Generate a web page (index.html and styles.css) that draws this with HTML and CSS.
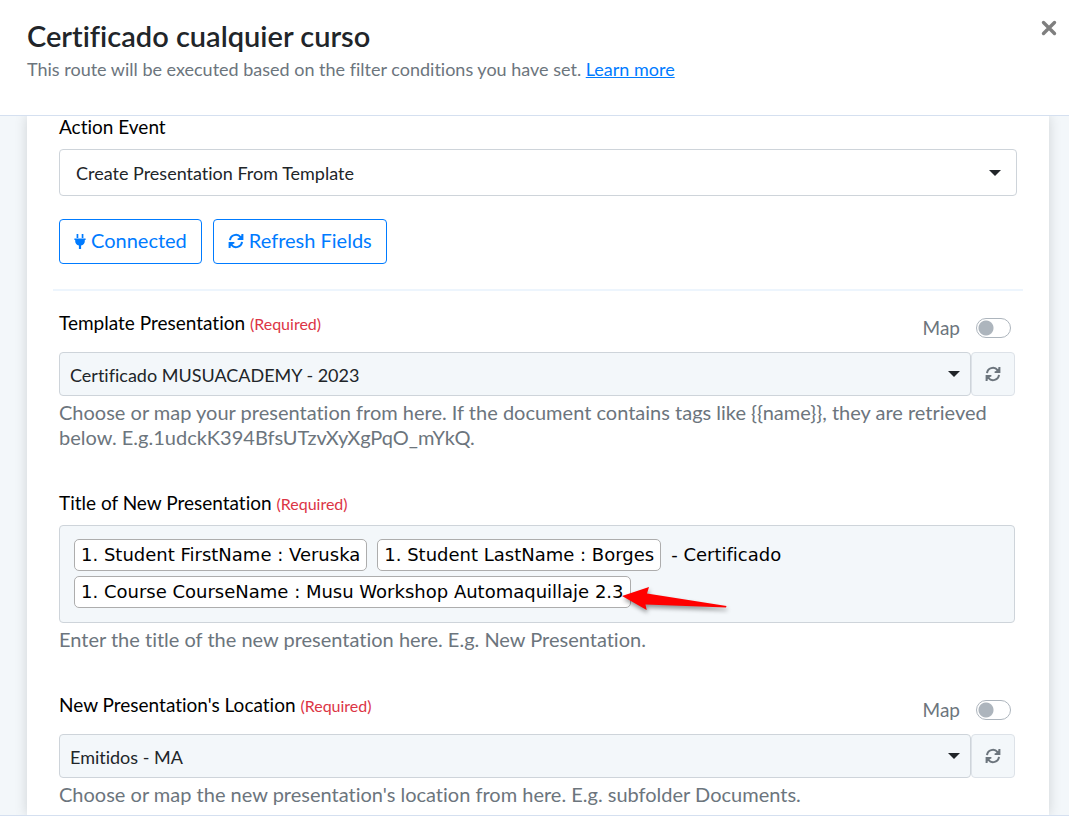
FILE: index.html
```html
<!DOCTYPE html>
<html lang="en">
    <head>
        <meta charset="utf-8" />
        <title>Certificado cualquier curso</title>
        <meta name="viewport" content="width=device-width" />
        <link rel="stylesheet" href="styles.css">
    </head>
    <body>
        <svg width="0" height="0" class="sprite" aria-hidden="true">
            <symbol id="icon-sync" viewBox="0 0 16 16">
                <path d="M2 7.2A6 6 0 0 1 12.6 4.1M14 8.8A6 6 0 0 1 3.4 11.9" fill="none" stroke="currentColor" stroke-width="2" />
                <path d="M15.4 1v6H9.6V5.4l1.4-.3 2.4-2.6V1zM.6 15V9h5.8v1.6l-1.4.3-2.4 2.6V15z" fill="currentColor" />
            </symbol>
            <symbol id="icon-plug" viewBox="0 0 12 16">
                <path d="M2.6 1h1.7v4H2.6zM7.7 1h1.7v4H7.7zM.4 5.5h11.2v1.6h-.8v1.2c0 2.1-1.5 3.9-3.7 4.3V16H4.9v-3.4C2.7 12.2 1.2 10.4 1.2 8.3V7.1H.4z" fill="currentColor" />
            </symbol>
        </svg>

        <div class="modal">
            <header class="modal-header">
                <div>
                    <h1>Certificado cualquier curso</h1>
                    <p>This route will be executed based on the filter conditions you have set. <a href="#">Learn more</a></p>
                </div>
                <button type="button" class="close" aria-label="Close">
                    <svg width="16" height="16" viewBox="0 0 16 16"><path d="M2.5 2.5l11 11M13.5 2.5l-11 11" stroke="currentColor" stroke-width="3.4" stroke-linecap="round" /></svg>
                </button>
            </header>

            <main class="modal-body">
                <form class="card">
                    <label class="event-label" for="action-event">Action Event</label>
                    <div class="select event-select">
                        <select id="action-event">
                            <option>Create Presentation From Template</option>
                        </select>
                    </div>

                    <div class="actions">
                        <button type="button" class="btn"><svg width="12" height="16"><use href="#icon-plug" /></svg>Connected</button>
                        <button type="button" class="btn"><svg width="16" height="16"><use href="#icon-sync" /></svg>Refresh Fields</button>
                    </div>

                    <hr />

                    <div class="field">
                        <div class="field-head">
                            <label for="template">Template Presentation <span class="required">(Required)</span></label>
                            <label class="map">Map <input type="checkbox" class="switch" /></label>
                        </div>
                        <div class="input-group">
                            <div class="select">
                                <select id="template">
                                    <option>Certificado MUSUACADEMY - 2023</option>
                                </select>
                            </div>
                            <button type="button" class="reload" aria-label="Refresh templates"><svg width="16" height="16"><use href="#icon-sync" /></svg></button>
                        </div>
                        <p class="help">Choose or map your presentation from here. If the document contains tags like {{name}}, they are retrieved below. E.g.1udckK394BfsUTzvXyXgPqO_mYkQ.</p>
                    </div>

                    <div class="field">
                        <div class="field-head compact">
                            <label id="title-label">Title of New Presentation <span class="required">(Required)</span></label>
                        </div>
                        <div class="tag-input" role="textbox" contenteditable="true" spellcheck="false" aria-labelledby="title-label">
                            <span class="tag">1. Student FirstName : Veruska</span>
                            <span class="tag">1. Student LastName : Borges</span>
                            <span>- Certificado</span>
                            <span class="tag">1. Course CourseName : Musu Workshop Automaquillaje 2.3<svg class="arrow" width="116" height="36" viewBox="0 0 116 36" aria-hidden="true"><path d="M4 14L31 5l-2 6.5L108.5 24l-.5 1.5L27.5 22.5l1.2 5.5z" fill="#f00" /></svg></span>
                        </div>
                        <p class="help">Enter the title of the new presentation here. E.g. New Presentation.</p>
                    </div>

                    <div class="field">
                        <div class="field-head">
                            <label for="location">New Presentation's Location <span class="required">(Required)</span></label>
                            <label class="map">Map <input type="checkbox" class="switch" /></label>
                        </div>
                        <div class="input-group">
                            <div class="select">
                                <select id="location">
                                    <option>Emitidos - MA</option>
                                </select>
                            </div>
                            <button type="button" class="reload" aria-label="Refresh locations"><svg width="16" height="16"><use href="#icon-sync" /></svg></button>
                        </div>
                        <p class="help">Choose or map the new presentation's location from here. E.g. subfolder Documents.</p>
                    </div>
                </form>
            </main>
            <footer class="modal-footer"></footer>
        </div>
    </body>
</html>
```
FILE: styles.css
```css
* {
    box-sizing: border-box;
}

body {
    margin: 0;
    color: #000;
    background: #fff;
    font-family: Lato, "Liberation Sans", sans-serif;
    font-size: 19px;
    font-variant-ligatures: none;
    line-height: 25px;
}

h1, p {
    margin: 0;
}

button, select {
    font: inherit;
    font-variant-ligatures: none;
}

.sprite {
    position: absolute;
}

.modal {
    display: flex;
    flex-direction: column;
    height: 100vh;
}

.modal-header {
    display: flex;
    justify-content: space-between;
    align-items: flex-start;
    padding: 19px 12px 33px 27px;
    border-bottom: 1px solid #d5e0f0;
}

.modal-header h1 {
    color: #212529;
    font-size: 29px;
    font-weight: 600;
    line-height: 34px;
    margin-bottom: 4px;
}

.modal-header p {
    color: #6c757d;
    font-size: 18px;
}

a {
    color: #007bff;
}

.close {
    display: flex;
    padding: 1px 0 0;
    border: 0;
    background: none;
    color: #7f7f7f;
}

.modal-body {
    flex: 1;
    min-height: 0;
    overflow: hidden;
    padding: 0 20px 0 27px;
    background: #f3f7fa;
}

.card {
    min-height: 100%;
    padding: 0 34px 6px 32px;
    background: #fff;
    box-shadow: 0 0 12px rgba(0, 0, 0, 0.15);
}

.event-label {
    display: block;
    line-height: 22px;
    margin-bottom: 11px;
}

/* the caret shares the grid cell with the select */
.select {
    display: grid;
    flex: 1;
    align-items: center;
}

.select select {
    grid-area: 1 / 1;
    width: 100%;
    height: 44px;
    padding: 2px 40px 0 10px;
    appearance: none;
    border: 1px solid #ced4da;
    border-radius: 4px;
    background: #f3f7fa;
    color: #212529;
    font-size: 18px;
}

.select::after {
    content: "";
    grid-area: 1 / 1;
    justify-self: end;
    margin-right: 11px;
    border: 6px solid transparent;
    border-top-color: #212529;
    border-bottom: 0;
    pointer-events: none;
}

.event-select {
    margin-right: -2px;
}

.event-select select {
    height: 47px;
    padding-left: 16px;
    background: #fff;
}

.event-select::after {
    margin-right: 16px;
}

.actions {
    display: flex;
    gap: 11px;
    margin-top: 23px;
}

.btn {
    display: flex;
    align-items: center;
    gap: 5px;
    height: 45px;
    padding: 0 14px 2px;
    border: 1px solid #007bff;
    border-radius: 4px;
    background: #fff;
    color: #007bff;
    font-size: 20px;
}

hr {
    height: 2px;
    margin: 25px -8px 19px -6px;
    border: 0;
    background: #edf5fd;
}

.field {
    margin-bottom: 40px;
}

.field:last-child {
    margin-bottom: 0;
}

.field-head {
    display: flex;
    justify-content: space-between;
    height: 42px;
}

.field-head.compact {
    height: 35px;
}

.required {
    color: #dc3545;
    font-size: 16px;
}

.map {
    display: flex;
    align-items: center;
    gap: 16px;
    height: 25px;
    margin: 5px 4px 0 0;
    color: #6c757d;
}

.switch {
    width: 35px;
    height: 20px;
    margin: 0;
    appearance: none;
    border: 1px solid #adb5bd;
    border-radius: 10px;
    background: radial-gradient(circle at 9px 9px, #adb5bd 7px, #fff 8px);
}

.input-group {
    display: flex;
}

.reload {
    display: flex;
    align-items: center;
    justify-content: center;
    width: 44px;
    padding: 0;
    border: 1px solid #dde2e8;
    border-radius: 4px;
    background: #f3f7fa;
    color: #6c757d;
}

.help {
    margin-top: 4px;
    color: #6c757d;
    font-size: 20px;
}

.tag-input {
    display: flex;
    flex-wrap: wrap;
    gap: 5px 10px;
    padding: 13px 14px 14px;
    border: 1px solid #ced4da;
    border-radius: 4px;
    background: #f3f7fa;
    font-family: "DejaVu Sans", sans-serif;
    font-size: 18px;
    line-height: 32px;
}

.tag {
    position: relative;
    padding: 0 6px;
    border: 1px solid #adadad;
    border-radius: 5px;
    background: #fff;
    line-height: 30px;
}

.arrow {
    position: absolute;
    top: 5px;
    left: calc(100% - 12px);
    filter: drop-shadow(1px 3px 2px rgba(0, 0, 0, 0.4));
}

.modal-footer {
    height: 12px;
    border-top: 1px solid #d5e0f0;
}
```
